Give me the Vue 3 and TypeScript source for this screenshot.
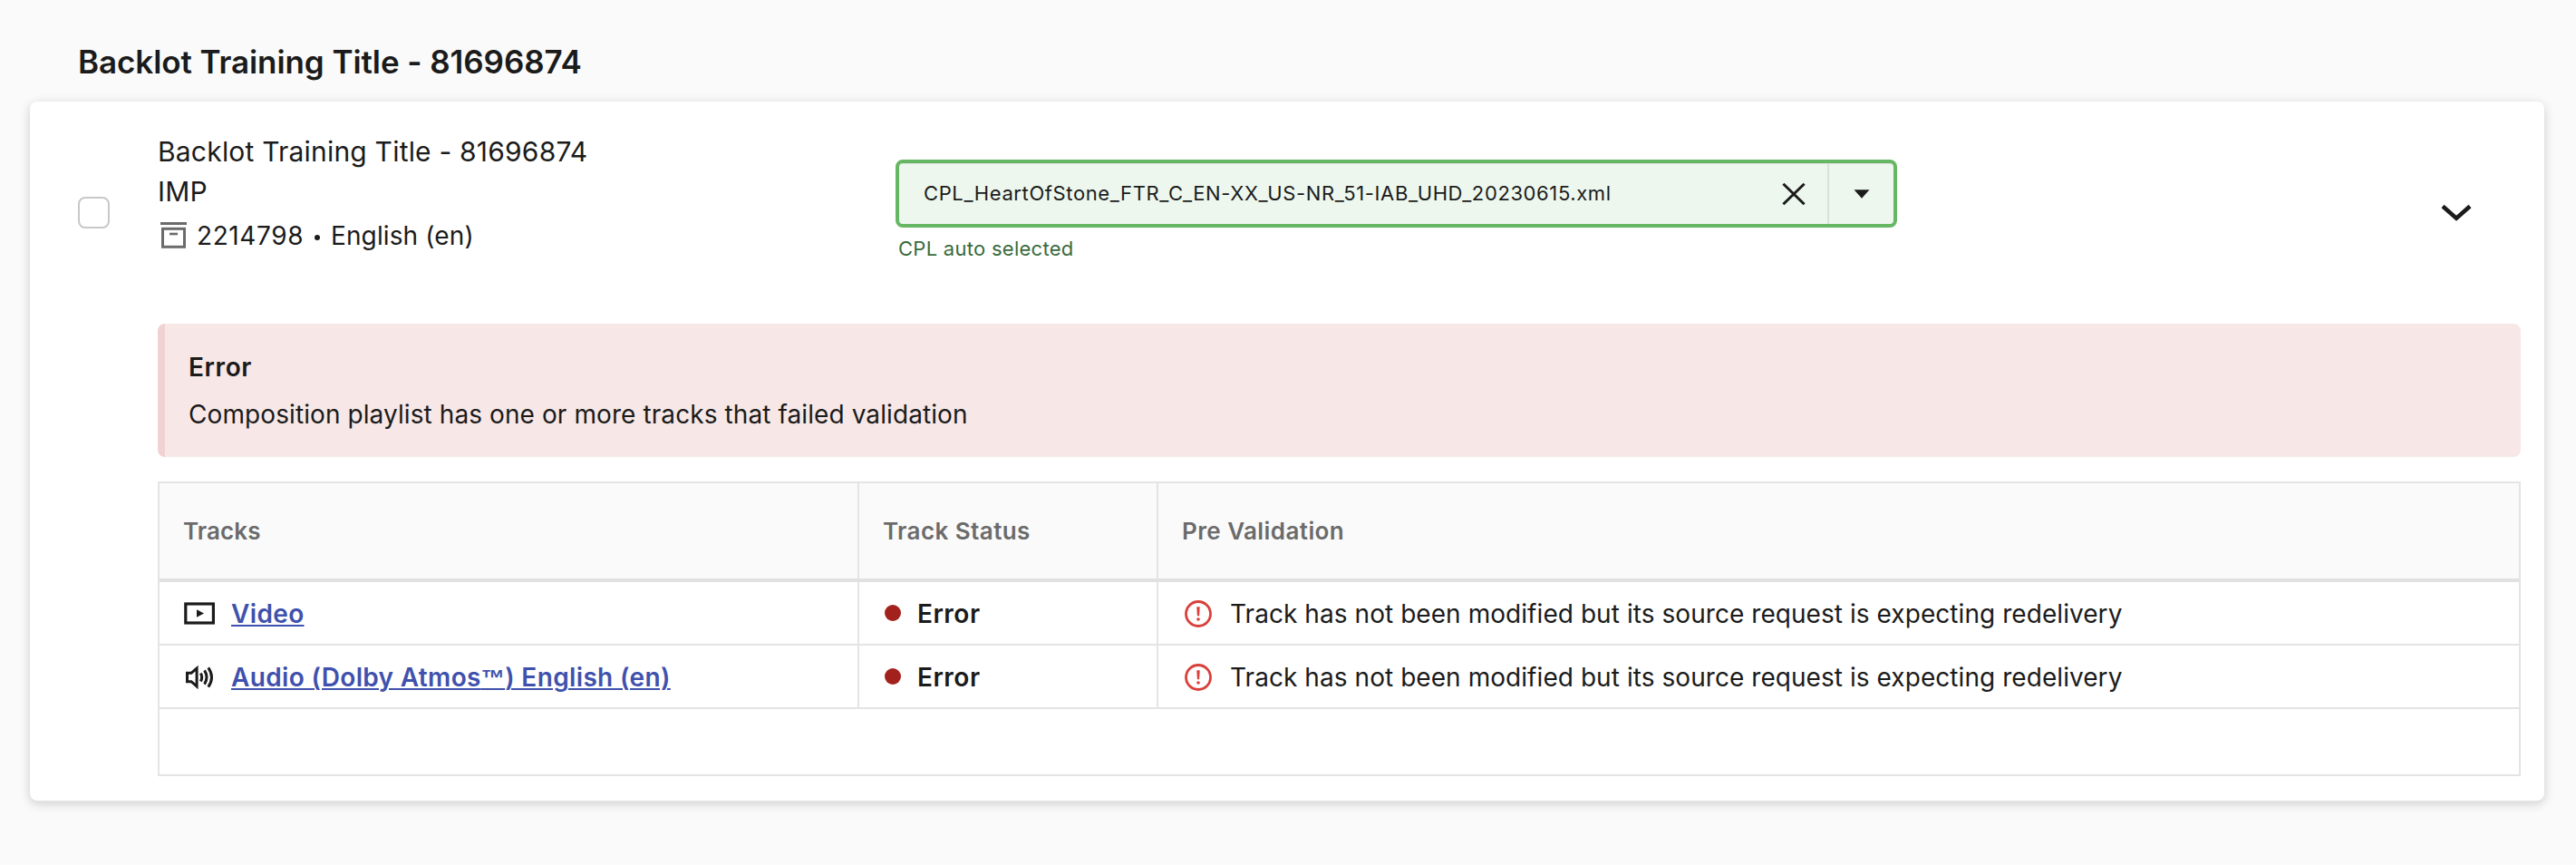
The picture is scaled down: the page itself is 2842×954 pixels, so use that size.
<script setup lang="ts">
interface Track {
  kind: 'video' | 'audio'
  name: string
  mark?: string
  suffix?: string
  status: string
  message: string
}

const title = 'Backlot Training Title - 81696874'
const redelivery = 'Track has not been modified but its source request is expecting redelivery'

const tracks: Track[] = [
  { kind: 'video', name: 'Video', status: 'Error', message: redelivery },
  {
    kind: 'audio',
    name: 'Audio (Dolby Atmos',
    mark: '™',
    suffix: ') English (en)',
    status: 'Error',
    message: redelivery,
  },
]
</script>

<template>
  <main class="page">
    <h1 class="page-title">{{ title }}</h1>

    <section class="card">
      <header class="summary">
        <span class="checkbox" role="checkbox" aria-checked="false"></span>

        <div class="request">
          <div class="line">{{ title }}</div>
          <div class="line">IMP</div>
          <div class="meta">
            <svg class="archive" width="29" height="29" viewBox="0 0 29 29" fill="none" stroke="#6b6b6b" stroke-width="3">
              <path d="M0 1.5H29" />
              <rect x="2.5" y="7.3" width="24" height="20" />
              <path d="M10 13H19" stroke-width="2.6" />
            </svg>
            <span class="number">2214798</span>
            <span class="bullet"></span>
            <span class="language">English (en)</span>
          </div>
        </div>

        <div class="picker">
          <div class="select">
            <span class="value">CPL_HeartOfStone_FTR_C_EN-XX_US-NR_51-IAB_UHD_20230615.xml</span>
            <svg class="clear" width="26" height="26" viewBox="0 0 26 26">
              <path d="M1.4 1.7L24.6 24.3M24.6 1.7L1.4 24.3" stroke="#1b1b1b" stroke-width="3" />
            </svg>
            <span class="toggle">
              <svg width="18" height="10" viewBox="0 0 18 10"><path d="M0.5 0.3H17.5L9 9.7Z" fill="#1b1b1b" /></svg>
            </span>
          </div>
          <div class="hint">CPL auto selected</div>
        </div>

        <svg class="chevron" width="36" height="20" viewBox="0 0 36 20">
          <path d="M3 2.6L18 15.8L33 2.6" fill="none" stroke="#1b1b1b" stroke-width="4.6" />
        </svg>
      </header>

      <div class="details">
        <div class="alert" role="alert">
          <strong class="alert-title">Error</strong>
          <span class="alert-text">Composition playlist has one or more tracks that failed validation</span>
        </div>

        <div class="table">
          <div class="row head">
            <div class="cell">Tracks</div>
            <div class="cell">Track Status</div>
            <div class="cell">Pre Validation</div>
          </div>
          <div v-for="track in tracks" :key="track.kind" class="row">
            <div class="cell">
              <svg v-if="track.kind === 'video'" class="kind" width="34" height="28" viewBox="0 0 34 28">
                <rect x="1.8" y="4" width="30.6" height="21" fill="none" stroke="#1b1b1b" stroke-width="3.2" />
                <path d="M14 10.3L22 14.5L14 18.7Z" fill="#1b1b1b" />
              </svg>
              <svg v-else class="kind" width="34" height="28" viewBox="0 0 34 28" fill="none" stroke="#1b1b1b" stroke-width="3">
                <path d="M3.5 10.3H8L14.1 5V25L8 19.7H3.5Z" />
                <path d="M18.4 10.6Q21 15 18.4 19.4M22.6 7.4Q27.4 15 22.6 22.6M26.8 4.4Q34.2 15 26.8 25.6" />
              </svg>
              <a class="link">{{ track.name }}<span v-if="track.mark" class="mark">{{ track.mark }}</span>{{ track.suffix }}</a>
            </div>
            <div class="cell">
              <span class="dot"></span>
              <strong class="status">{{ track.status }}</strong>
            </div>
            <div class="cell">
              <svg class="alert-icon" width="30" height="30" viewBox="0 0 30 30">
                <circle cx="15" cy="15" r="13.5" fill="none" stroke="#d9403a" stroke-width="2.8" />
                <path d="M13.3 7.3H16.7L16.1 17.3H13.9Z" fill="#d9403a" />
                <circle cx="15" cy="21" r="1.8" fill="#d9403a" />
              </svg>
              <span class="message">{{ track.message }}</span>
            </div>
          </div>
          <div class="foot"></div>
        </div>
      </div>
    </section>
  </main>
</template>

<style>
body {
  margin: 0;
  background: #fafafa;
}
</style>

<style scoped>
.page {
  box-sizing: border-box;
  height: 954px;
  padding: 46px 35px 0 33px;
  font-family: Inter, 'Liberation Sans', sans-serif;
  font-size: 28px;
  color: #1b1b1b;
  background: #fafafa;
  white-space: nowrap;
}

svg {
  display: block;
  flex: none;
}

.page-title {
  margin: 0 0 22px 53px;
  font-size: 35px;
  font-weight: 600;
  line-height: 44px;
  letter-spacing: -0.08px;
}

.card {
  box-sizing: border-box;
  height: 771px;
  background: #fff;
  border-radius: 8px;
  box-shadow: 0 2px 0 #e2e2e2, 0 3px 12px rgba(0, 0, 0, 0.19);
}

.summary {
  display: flex;
  align-items: flex-start;
  height: 245px;
  padding: 0 78px 0 53px;
  box-sizing: border-box;
}

.checkbox {
  box-sizing: border-box;
  width: 35px;
  height: 35px;
  margin-top: 105px;
  border: 2px solid #c8c8c8;
  border-radius: 8px;
  background: #fff;
}

.request {
  width: 783px;
  margin: 33px 0 0 52px;
}

.line {
  margin-left: 1px;
  font-size: 30px;
  line-height: 44px;
  letter-spacing: 0.2px;
}

.meta {
  display: flex;
  align-items: center;
  height: 52px;
  line-height: 52px;
}

.archive {
  margin-left: 4px;
}

.number {
  width: 118px;
  margin-left: 11px;
  padding-top: 1px;
  letter-spacing: 0.6px;
}

.bullet {
  width: 6px;
  height: 6px;
  margin: 6px 0 0 12px;
  border-radius: 50%;
  background: #1b1b1b;
}

.language {
  margin-left: 12px;
  padding-top: 2px;
  letter-spacing: 0.12px;
}

.picker {
  width: 1105px;
  margin-top: 64px;
  margin-left: 32px;
}

.select {
  display: flex;
  align-items: center;
  box-sizing: border-box;
  height: 75px;
  border: 4px solid #66b764;
  border-radius: 8px;
  background: #edf7ee;
  box-shadow: inset 0 1px 0 #dce1dc;
}

.value {
  flex: 1;
  padding: 0 0 1px 27px;
  font-size: 22px;
  letter-spacing: 0.61px;
}

.clear {
  margin-right: 24px;
}

.toggle {
  display: flex;
  align-items: center;
  box-sizing: border-box;
  width: 73px;
  height: 67px;
  padding-left: 27px;
  border-left: 2px solid #dbe0db;
}

.hint {
  margin: 8px 0 0 3px;
  font-size: 22px;
  line-height: 30px;
  letter-spacing: 0.27px;
  color: #3a6b3c;
}

.chevron {
  margin: 113px 0 0 599px;
}

.details {
  display: flex;
  flex-direction: column;
  gap: 27px;
  padding: 0 26px 0 141px;
}

.alert {
  display: flex;
  flex-direction: column;
  box-sizing: border-box;
  height: 147px;
  padding: 22px 26px;
  border-left: 8px solid #efd2d1;
  border-radius: 8px;
  background: #f7e8e7;
  line-height: 52px;
}

.alert-title {
  font-weight: 600;
  letter-spacing: 0.6px;
}

.alert-text {
  letter-spacing: 0.09px;
}

.table {
  border: 2px solid #e4e4e4;
}

.row {
  display: grid;
  grid-template-columns: 770px 330px 1fr;
  height: 70px;
}

.cell {
  display: flex;
  align-items: center;
  box-sizing: border-box;
  padding-left: 27px;
  border-bottom: 2px solid #e4e4e4;
}

.cell + .cell {
  border-left: 2px solid #e4e4e4;
}

.head {
  height: 109px;
  font-size: 26px;
  font-weight: 600;
  letter-spacing: 0.42px;
  color: #6b6b6b;
  background: #fafafa;
}

.head .cell {
  padding-left: 26px;
  border-bottom: 4px solid #e1e1e1;
}

.head .cell:first-child {
  letter-spacing: 0.1px;
}

.link {
  margin-left: 18px;
  padding-top: 2px;
  font-weight: 600;
  letter-spacing: 0.35px;
  color: #3f51ad;
  text-decoration: underline;
  text-decoration-thickness: 2px;
  text-underline-offset: 2px;
}

.mark {
  font-family: 'Liberation Sans', sans-serif;
  font-size: 26px;
}

.dot {
  width: 18px;
  height: 18px;
  margin-left: 1px;
  border-radius: 50%;
  background: #a3211d;
}

.status {
  margin-left: 18px;
  padding-top: 2px;
  font-weight: 600;
  letter-spacing: 0.5px;
}

.alert-icon {
  margin: 1px 0 0 2px;
}

.message {
  margin-left: 20px;
  padding-top: 2px;
  letter-spacing: 0.06px;
}

.foot {
  height: 72px;
}
</style>
